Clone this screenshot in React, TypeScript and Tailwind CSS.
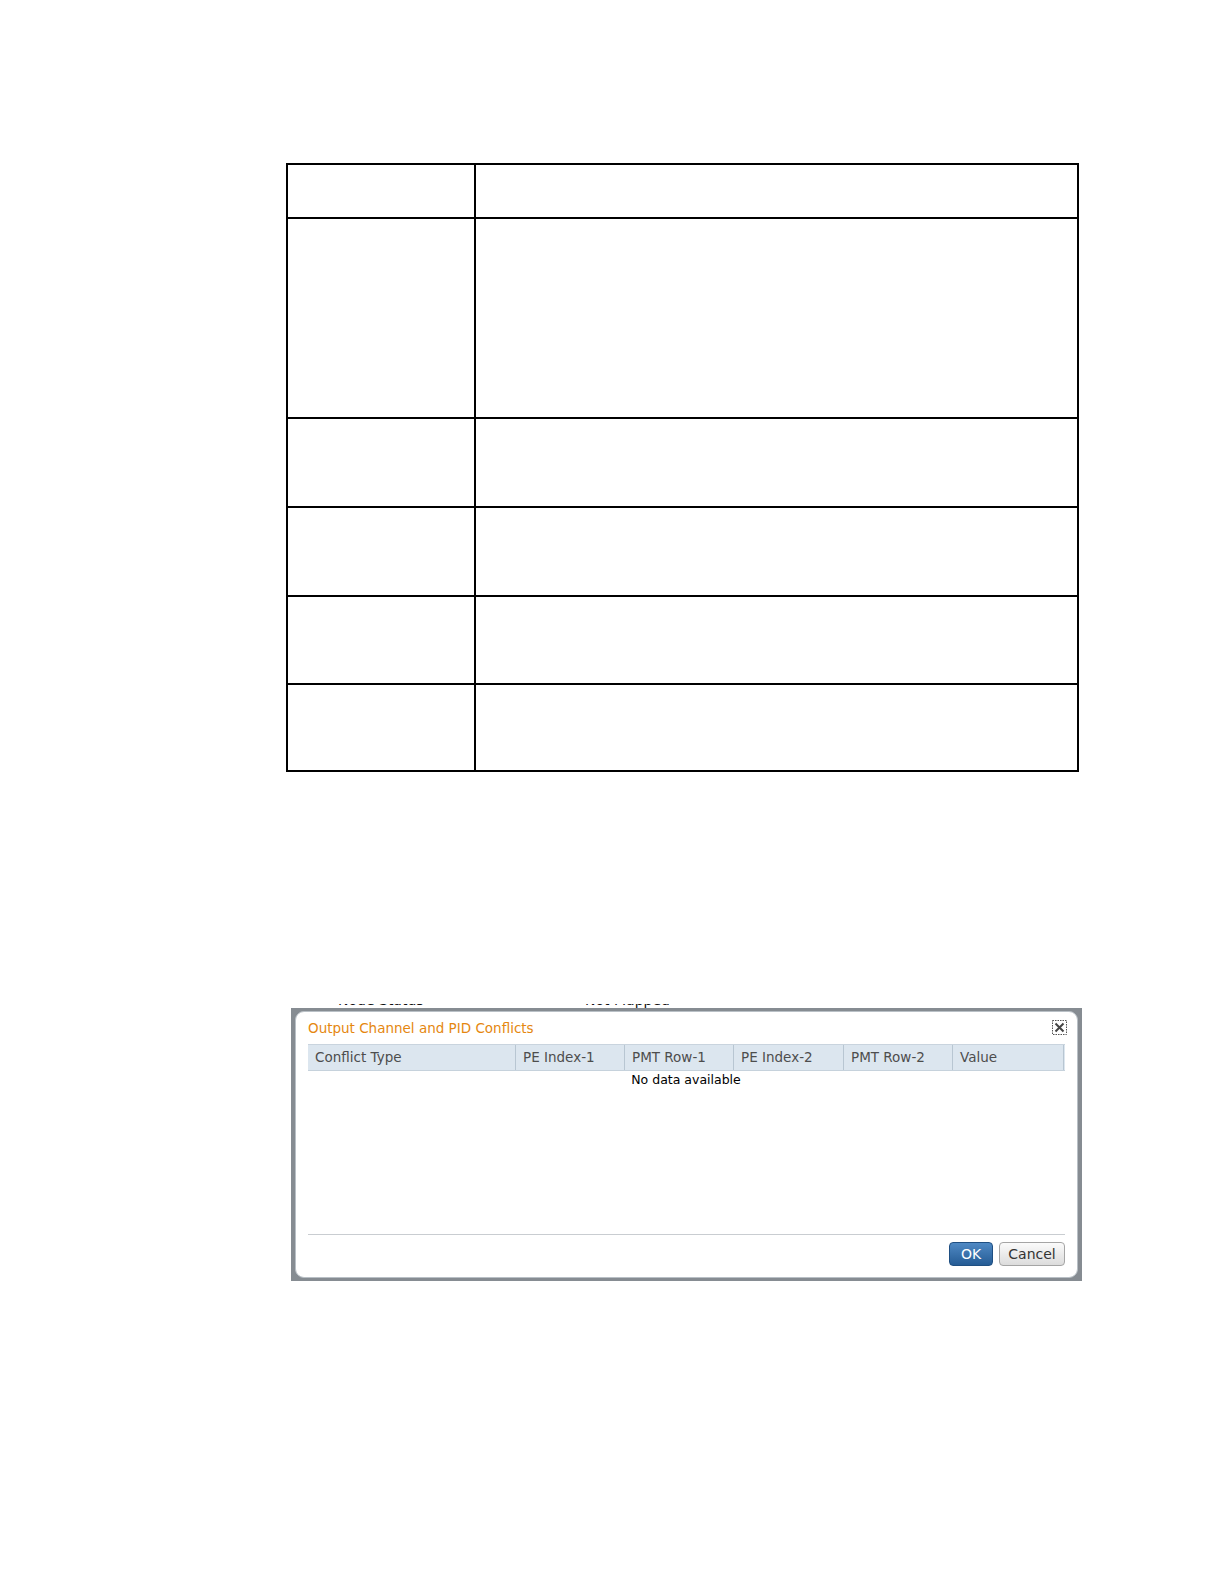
import React from "react";

const rows = [54, 200, 89, 89, 88, 85];

const cols = [
  { label: "Conflict Type", w: 208 },
  { label: "PE Index-1", w: 109 },
  { label: "PMT Row-1", w: 109 },
  { label: "PE Index-2", w: 110 },
  { label: "PMT Row-2", w: 109 },
  { label: "Value", w: 111 },
];

function CloseIcon() {
  return (
    <svg width="15" height="15" viewBox="0 0 15 15">
      <rect x="0.5" y="0.5" width="14" height="14" fill="none" stroke="#555" strokeDasharray="1.5 1" />
      <path d="M3.5 3.5 L11.5 11.5 M11.5 3.5 L3.5 11.5" stroke="#444" strokeWidth="2" />
    </svg>
  );
}

export default function App() {
  return (
    <div
      className="w-[1225px] min-h-[1584px] bg-white pt-[163px]"
      style={{ fontFamily: '"DejaVu Sans", "Liberation Sans", sans-serif' }}
    >
      <div className="ml-[286px] w-[793px] border-2 border-black">
        {rows.map((h, i) => (
          <div
            key={i}
            className={`flex ${i < rows.length - 1 ? "border-b-2 border-black" : ""}`}
            style={{ height: h }}
          >
            <div className="w-[188px] border-r-2 border-black" />
            <div className="flex-1" />
          </div>
        ))}
      </div>

      <div className="mt-[232px] ml-[291px] w-[791px] h-[4px] overflow-hidden relative">
        <div className="absolute left-[47px] top-[-11px] text-[14px] leading-[14px] text-[#111]">Node Status</div>
        <div className="absolute left-[294px] top-[-11px] text-[14px] leading-[14px] text-[#111]">Not Mapped</div>
      </div>

      <div className="ml-[291px] w-[791px] h-[273px] bg-[#868c92] pt-[3px] px-[4px] pb-[3px]">
        <div className="h-full bg-white rounded-[9px] border border-[#b9c0c6] flex flex-col px-[12px]">
          <div className="h-[32px] flex items-center justify-between">
            <span className="text-[13.5px] text-[#e5870f]">Output Channel and PID Conflicts</span>
            <span className="mr-[-2px] mt-[-2px]"><CloseIcon /></span>
          </div>
          <div className="flex h-[27px] bg-[#dce6ef] border-t border-[#c9d4de] border-b border-b-[#c6d2dc]">
            {cols.map((c) => (
              <div
                key={c.label}
                className="flex items-center pl-[7px] text-[13.5px] text-[#4d4d4d] border-r border-[#b8c6d2]"
                style={{ width: c.w }}
              >
                {c.label}
              </div>
            ))}
          </div>
          <div className="h-[163px]">
            <div className="w-[756px] text-center text-[12.5px] leading-[18px] text-black">No data available</div>
          </div>
          <div className="h-px bg-[#c9cdd1]" />
          <div className="mt-[7px] flex justify-end gap-[6px]">
            <button className="w-[44px] h-[24px] rounded-[4px] border border-[#1f4f82] bg-gradient-to-b from-[#4f89c4] to-[#255c95] text-white text-[14px] leading-none">
              OK
            </button>
            <button className="w-[66px] h-[24px] rounded-[4px] border border-[#a5a5a5] bg-gradient-to-b from-[#fbfbfb] to-[#dcdcdc] text-[#333] text-[14px] leading-none">
              Cancel
            </button>
          </div>
        </div>
      </div>
    </div>
  );
}
